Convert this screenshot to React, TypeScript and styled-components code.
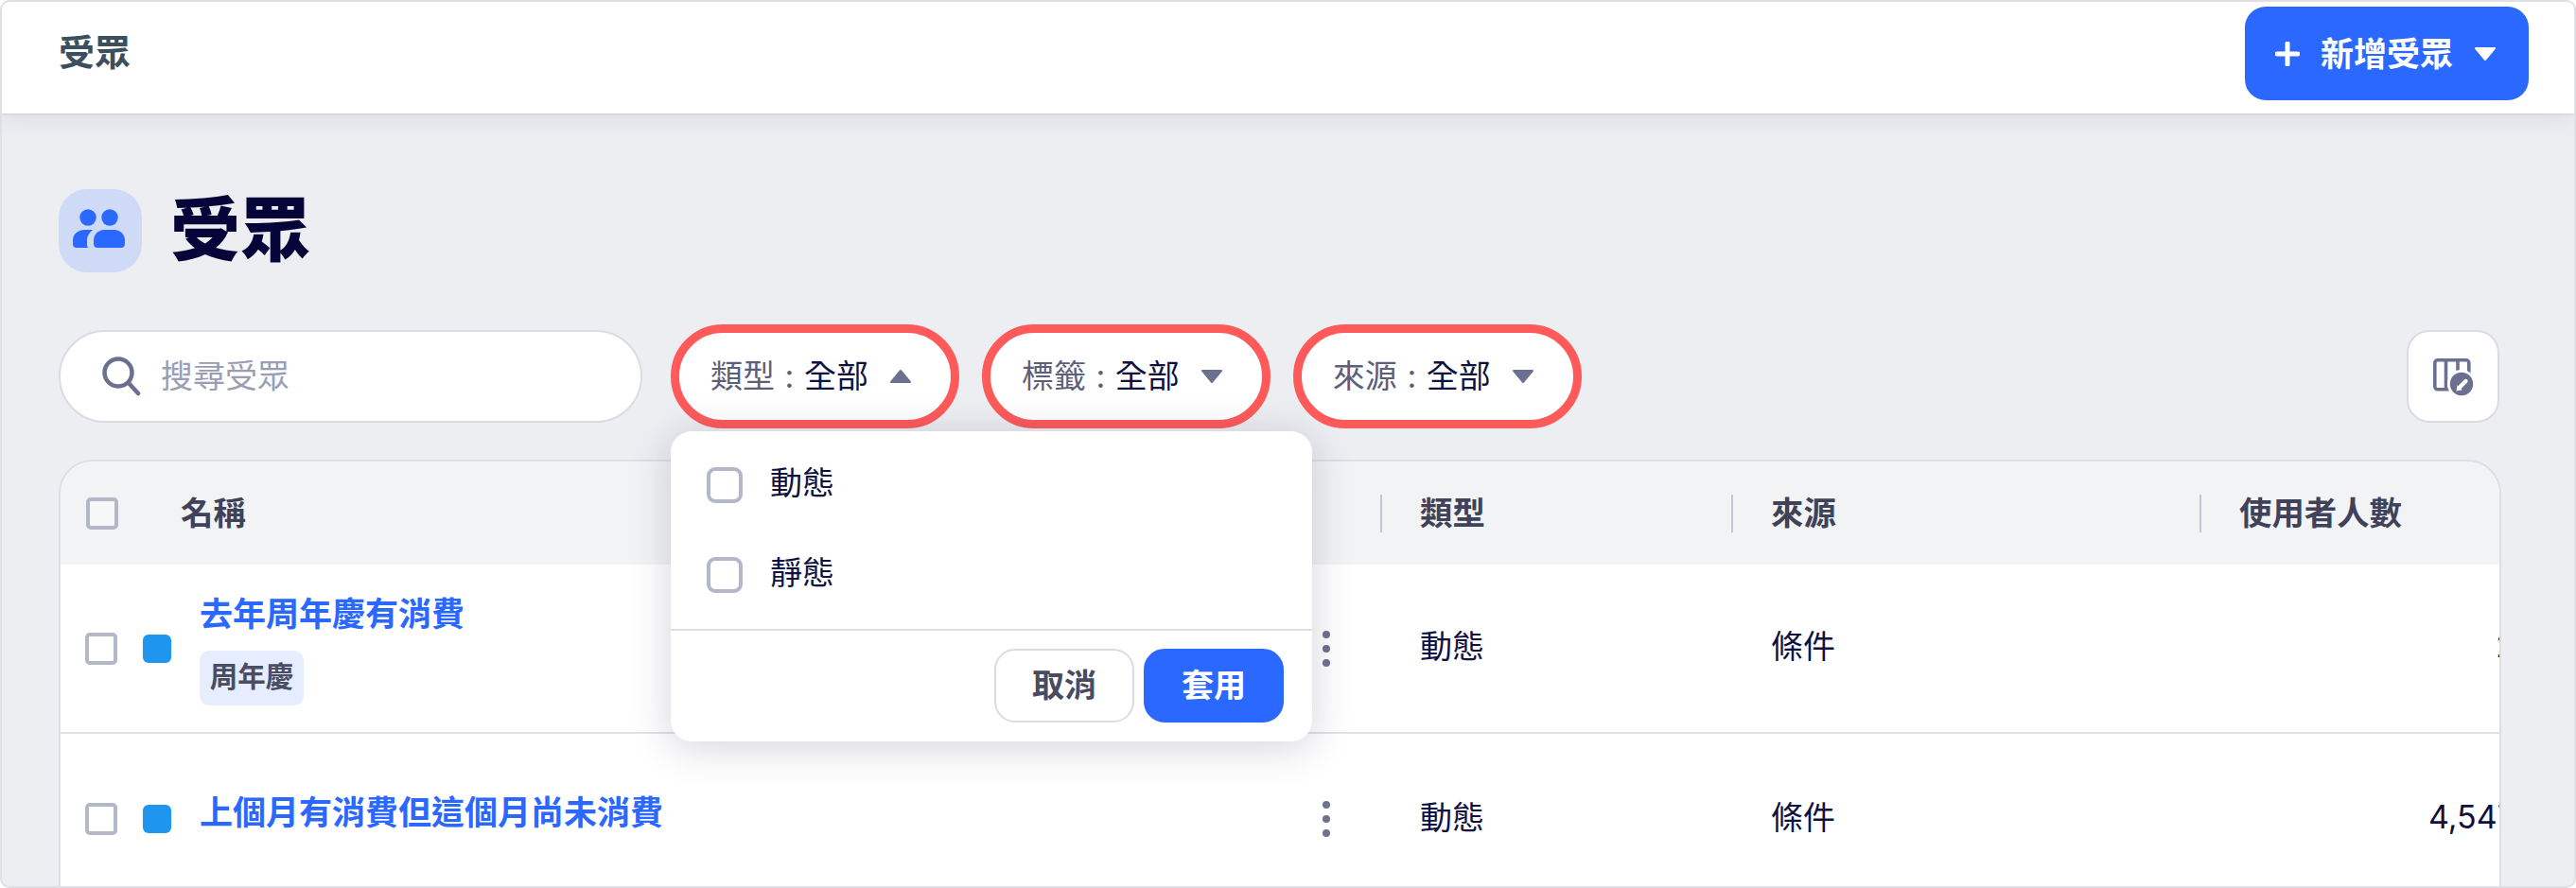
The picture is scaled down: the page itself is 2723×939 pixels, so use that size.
import React from "react";
import styled, { createGlobalStyle } from "styled-components";

const GlobalStyle = createGlobalStyle`
  html, body {
    margin: 0;
    background: #ffffff;
  }
  * {
    box-sizing: border-box;
  }
`;

const Frame = styled.div`
  width: 2723px;
  height: 939px;
  display: flex;
  flex-direction: column;
  overflow: hidden;
  border: 2px solid #dfe0e5;
  border-radius: 10px;
  background: #edeef2;
  font-family: Inter, "Noto Sans CJK TC", sans-serif;
  color: #0f1240;
`;

const TopBar = styled.header`
  position: relative;
  z-index: 1;
  flex: none;
  height: 118px;
  display: flex;
  justify-content: space-between;
  align-items: flex-start;
  padding: 5px 48px 0 60px;
  background: #ffffff;
  box-shadow: 0 1px 2px rgba(40, 44, 70, 0.12), 0 8px 24px rgba(40, 44, 70, 0.07);
`;

const BarTitle = styled.div`
  font-size: 38px;
  line-height: 96px;
  font-weight: 700;
  color: #3c4f5e;
`;

const CreateButton = styled.button`
  width: 300px;
  height: 99px;
  display: flex;
  align-items: center;
  gap: 22px;
  padding: 0 0 0 32px;
  border: 0;
  border-radius: 22px;
  background: #2b68ff;
  color: #ffffff;
  font: inherit;
  font-size: 35px;
  font-weight: 700;
`;

const ButtonText = styled.span`
  margin-bottom: 4px;
`;

const Main = styled.main`
  flex: 1;
  min-height: 0;
  padding: 80px 77px 0 60px;
`;

const Heading = styled.div`
  display: flex;
  align-items: center;
  gap: 30px;
  margin-bottom: 55px;
`;

const HeadingIcon = styled.div`
  width: 88px;
  height: 88px;
  display: flex;
  align-items: center;
  justify-content: center;
  padding: 0 3px 6px 0;
  border-radius: 30px;
  background: #cfdaf6;
`;

const HeadingText = styled.h1`
  margin: 0 0 2px;
  font-size: 74px;
  line-height: 86px;
  font-weight: 900;
  color: #05053a;
`;

const Toolbar = styled.div`
  display: flex;
  align-items: center;
  height: 110px;
  padding-right: 2px;
  margin-bottom: 33px;
`;

const SearchBox = styled.div`
  width: 617px;
  height: 98px;
  display: flex;
  align-items: center;
  gap: 21px;
  padding-left: 43px;
  margin-right: 30px;
  border: 2px solid #dbdce3;
  border-radius: 49px;
  background: #ffffff;
  font-size: 34px;
  color: #9a9db3;
`;

const Placeholder = styled.span`
  margin-bottom: 6px;
`;

const FilterAnchor = styled.div<{ $gap: number }>`
  position: relative;
  margin-right: ${(p) => p.$gap}px;
`;

const FilterButton = styled.div`
  height: 110px;
  display: flex;
  align-items: center;
  gap: 22px;
  padding: 0 41px 0 33px;
  border: 9px solid #fe5a5a;
  border-radius: 55px;
  background: #ffffff;
  font-size: 34px;
  white-space: pre;
`;

const FilterText = styled.span`
  margin-bottom: 6px;
  word-spacing: 1px;
`;

const FilterKey = styled.span`
  color: #5c5f7c;
`;

const FilterValue = styled.span`
  color: #0f1240;
`;

const ColumnsButton = styled.div`
  width: 98px;
  height: 98px;
  margin-left: auto;
  display: flex;
  align-items: center;
  justify-content: center;
  padding: 3px 0 0 4px;
  border: 2px solid #dbdce3;
  border-radius: 24px;
  background: #ffffff;
`;

const Popover = styled.div`
  position: absolute;
  z-index: 5;
  top: 113px;
  left: 0;
  width: 678px;
  height: 328px;
  display: flex;
  flex-direction: column;
  border-radius: 22px;
  background: #ffffff;
  box-shadow: 0 6px 44px rgba(30, 35, 70, 0.2);
`;

const OptionList = styled.div`
  flex: 1;
  padding-top: 9px;
`;

const Option = styled.div`
  height: 95px;
  display: flex;
  align-items: center;
  gap: 29px;
  padding-left: 38px;
  font-size: 34px;
`;

const OptionLabel = styled.span`
  position: relative;
  top: -4px;
`;

const PopoverFooter = styled.div`
  height: 119px;
  display: flex;
  justify-content: flex-end;
  align-items: center;
  gap: 10px;
  padding: 0 30px 2px 0;
  border-top: 2px solid #dfe0e6;
`;

const PopoverButton = styled.button<{ $primary?: boolean }>`
  width: 148px;
  height: 78px;
  border: 2px solid ${(p) => (p.$primary ? "#2b68ff" : "#dbdce3")};
  border-radius: 22px;
  background: ${(p) => (p.$primary ? "#2b68ff" : "#ffffff")};
  color: ${(p) => (p.$primary ? "#ffffff" : "#484b62")};
  font: inherit;
  font-size: 34px;
  font-weight: 700;
  padding: 0 0 5px;
`;

const Table = styled.section`
  width: 2582px;
  overflow: hidden;
  border: 2px solid #dcdde5;
  border-bottom: 0;
  border-radius: 36px 36px 0 0;
  background: #ffffff;
`;

const Row = styled.div<{ $height: number; $head?: boolean; $line?: boolean }>`
  display: grid;
  grid-template-columns: 1395px 371px 495px 334px;
  height: ${(p) => p.$height}px;
  align-items: center;
  background: ${(p) => (p.$head ? "#f2f3f5" : "#ffffff")};
  border-bottom: ${(p) => (p.$line ? "2px solid #dfe0e8" : "0")};
  box-sizing: content-box;
`;

const Check = styled.span<{ $size: number; $tint?: boolean }>`
  flex: none;
  display: block;
  width: ${(p) => p.$size}px;
  height: ${(p) => p.$size}px;
  border: 4px solid #b4b7c8;
  border-radius: ${(p) => (p.$size > 35 ? 9 : 5)}px;
  background: ${(p) => (p.$tint ? "#f6f7f9" : "#ffffff")};
`;

const NameHead = styled.div`
  display: flex;
  align-items: center;
  gap: 66px;
  padding-left: 27px;
`;

const HeadLabel = styled.span`
  position: relative;
  top: -3px;
  font-size: 34.4px;
  font-weight: 700;
  color: #3f4258;
`;

const HeadCell = styled.div`
  display: flex;
  align-items: center;
  gap: 40px;
`;

const HeadDivider = styled.span`
  width: 2px;
  height: 40px;
  background: #c4c6d2;
`;

const NameCell = styled.div`
  display: flex;
  align-items: center;
  padding: 0 53px 0 26px;
`;

const Swatch = styled.span`
  flex: none;
  width: 30px;
  height: 30px;
  margin: 0 30px 0 27px;
  border-radius: 6px;
  background: #1e96f0;
`;

const NameBlock = styled.div`
  flex: 1;
`;

const NameLink = styled.div`
  font-size: 35px;
  line-height: 48px;
  font-weight: 700;
  color: #2b68ff;
  margin-bottom: 15px;
`;

const Tag = styled.span`
  display: block;
  width: 110px;
  height: 58px;
  border-radius: 10px;
  background: #e6edff;
  font-size: 29.5px;
  line-height: 54px;
  font-weight: 700;
  text-align: center;
  color: #4a4d63;
`;

const BodyCell = styled.div`
  position: relative;
  top: -4px;
  padding-left: 42px;
  font-size: 34px;
`;

const CountCell = styled.div`
  position: relative;
  top: -3px;
  font-size: 34px;
  text-align: right;
`;

const Caret = ({ up, color }: { up?: boolean; color: string }) => (
  <svg width="24" height="16" viewBox="0 0 24 16" style={{ flex: "none" }}>
    <path
      d={up ? "M12 2 L22 14 H2 Z" : "M2 2 H22 L12 14 Z"}
      fill={color}
      stroke={color}
      strokeWidth="2"
      strokeLinejoin="round"
    />
  </svg>
);

const PlusIcon = () => (
  <svg width="26" height="26" viewBox="0 0 26 26" style={{ flex: "none" }}>
    <path d="M13 2 V24 M2 13 H24" stroke="#ffffff" strokeWidth="5" strokeLinecap="round" />
  </svg>
);

const PeopleIcon = () => (
  <svg width="55" height="41" viewBox="0 0 55 41">
    <g fill="#2b68ff">
      <circle cx="16" cy="9" r="8.7" />
      <circle cx="39" cy="9" r="8.7" />
      <path d="M0 37 V33 C0 26 6 22 13 22 H21 C17 25 15 29 15 33 V38 C15 39 15.4 40 16 41 H4 C1.5 41 0 39.5 0 37 Z" />
      <path d="M33 22 H44 C50 22 55 27 55 33 V37 C55 39.5 53.5 41 51 41 H26 C23.5 41 22 39.5 22 37 V33 C22 27 27 22 33 22 Z" />
    </g>
  </svg>
);

const SearchIcon = () => (
  <svg width="42" height="44" viewBox="0 0 42 44" style={{ flex: "none" }}>
    <circle cx="18" cy="18" r="14.5" fill="none" stroke="#6c7090" strokeWidth="4.5" />
    <path d="M29 29 L39 40" stroke="#6c7090" strokeWidth="4.5" strokeLinecap="round" />
  </svg>
);

const ColumnsIcon = () => (
  <svg width="46" height="42" viewBox="0 0 46 42">
    <rect x="1.8" y="1.8" width="36" height="31" rx="3" fill="none" stroke="#6c7090" strokeWidth="3.6" />
    <path d="M13.5 2 V33 M26 2 V20" stroke="#6c7090" strokeWidth="3.6" />
    <circle cx="30" cy="27" r="15" fill="#ffffff" />
    <circle cx="30" cy="27" r="12.2" fill="#6c7090" />
    <path d="M28 30.5 L34.5 24" stroke="#ffffff" strokeWidth="4.2" strokeLinecap="round" />
    <path d="M24.5 34.5 L25.6 28.2 L30.8 33.2 Z" fill="#ffffff" />
  </svg>
);

const KebabIcon = () => (
  <svg width="8" height="38" viewBox="0 0 8 38" style={{ flex: "none" }}>
    <g fill="#6e7190">
      <circle cx="4" cy="4" r="4" />
      <circle cx="4" cy="19" r="4" />
      <circle cx="4" cy="34" r="4" />
    </g>
  </svg>
);

const filters = [
  { key: "類型", open: true, gap: 24 },
  { key: "標籤", open: false, gap: 24 },
  { key: "來源", open: false, gap: 0 },
];

const rows = [
  { name: "去年周年慶有消費", tag: "周年慶", count: "2", height: 177, line: true },
  { name: "上個月有消費但這個月尚未消費", count: "4,547", height: 180, line: false },
];

export default function App() {
  return (
    <>
      <GlobalStyle />
      <Frame>
        <TopBar>
          <BarTitle>受眾</BarTitle>
          <CreateButton>
            <PlusIcon />
            <ButtonText>新增受眾</ButtonText>
            <Caret color="#ffffff" />
          </CreateButton>
        </TopBar>
        <Main>
          <Heading>
            <HeadingIcon>
              <PeopleIcon />
            </HeadingIcon>
            <HeadingText>受眾</HeadingText>
          </Heading>
          <Toolbar>
            <SearchBox>
              <SearchIcon />
              <Placeholder>搜尋受眾</Placeholder>
            </SearchBox>
            {filters.map((f) => (
              <FilterAnchor key={f.key} $gap={f.gap}>
                <FilterButton>
                  <FilterText>
                    <FilterKey>{f.key} : </FilterKey>
                    <FilterValue>全部</FilterValue>
                  </FilterText>
                  <Caret up={f.open} color="#6c7090" />
                </FilterButton>
                {f.open && (
                  <Popover>
                    <OptionList>
                      <Option>
                        <Check $size={38} />
                        <OptionLabel>動態</OptionLabel>
                      </Option>
                      <Option>
                        <Check $size={38} />
                        <OptionLabel>靜態</OptionLabel>
                      </Option>
                    </OptionList>
                    <PopoverFooter>
                      <PopoverButton>取消</PopoverButton>
                      <PopoverButton $primary>套用</PopoverButton>
                    </PopoverFooter>
                  </Popover>
                )}
              </FilterAnchor>
            ))}
            <ColumnsButton>
              <ColumnsIcon />
            </ColumnsButton>
          </Toolbar>
          <Table>
            <Row $height={109} $head>
              <NameHead>
                <Check $size={34} $tint />
                <HeadLabel>名稱</HeadLabel>
              </NameHead>
              <HeadCell>
                <HeadDivider />
                <HeadLabel>類型</HeadLabel>
              </HeadCell>
              <HeadCell>
                <HeadDivider />
                <HeadLabel>來源</HeadLabel>
              </HeadCell>
              <HeadCell>
                <HeadDivider />
                <HeadLabel>使用者人數</HeadLabel>
              </HeadCell>
            </Row>
            {rows.map((r) => (
              <Row key={r.name} $height={r.height} $line={r.line}>
                <NameCell>
                  <Check $size={34} />
                  <Swatch />
                  <NameBlock>
                    <NameLink>{r.name}</NameLink>
                    {r.tag && <Tag>{r.tag}</Tag>}
                  </NameBlock>
                  <KebabIcon />
                </NameCell>
                <BodyCell>動態</BodyCell>
                <BodyCell>條件</BodyCell>
                <CountCell>{r.count}</CountCell>
              </Row>
            ))}
          </Table>
        </Main>
      </Frame>
    </>
  );
}
